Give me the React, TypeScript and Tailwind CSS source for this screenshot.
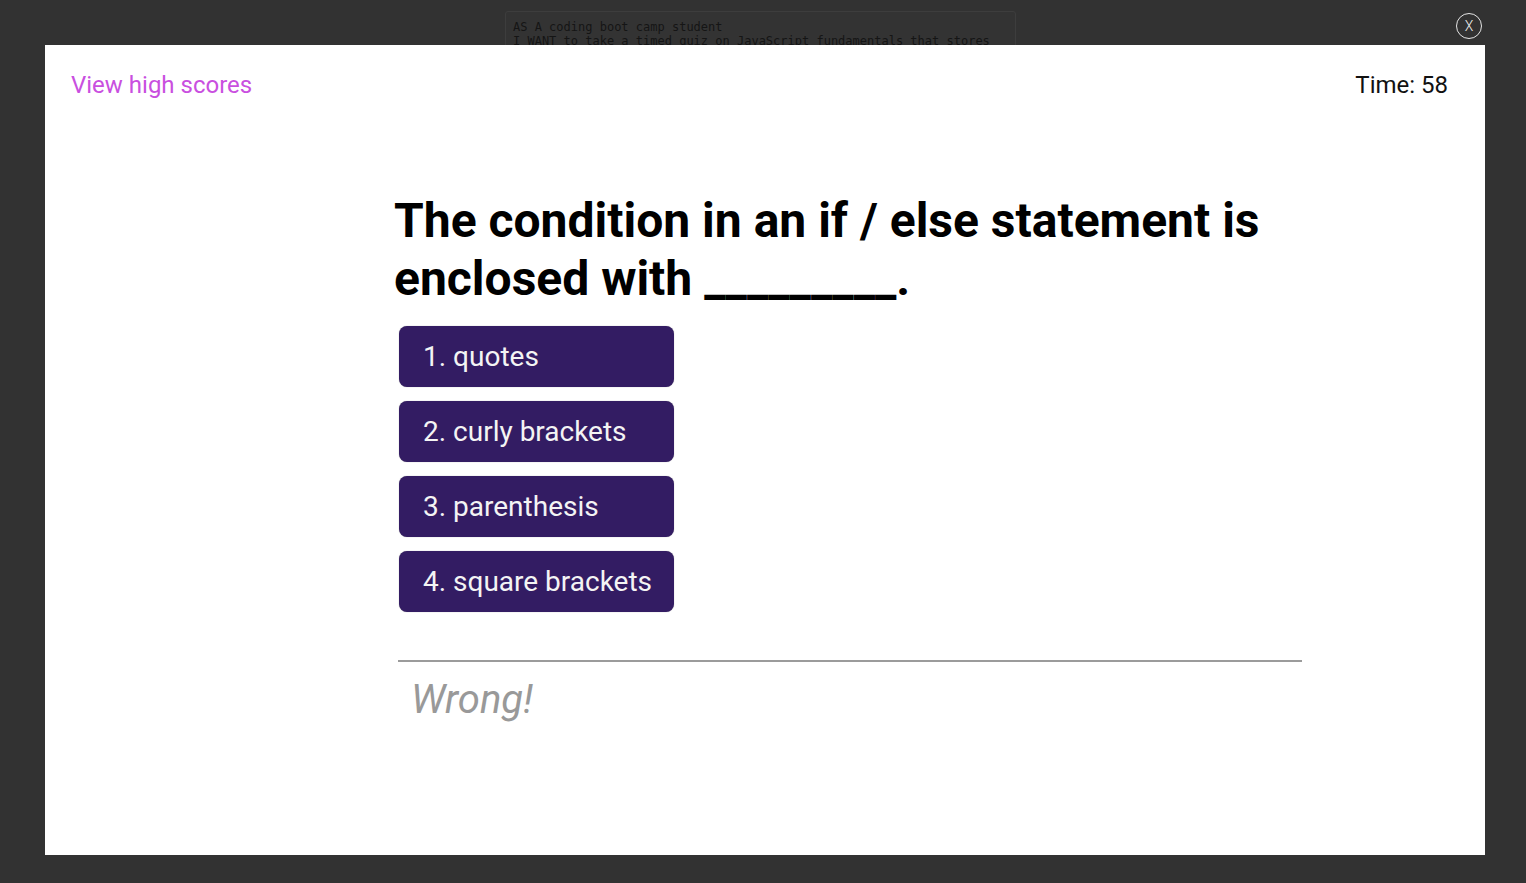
const choices = ["1. quotes", "2. curly brackets", "3. parenthesis", "4. square brackets"]

const App = () => {
  return (
    <div className="w-full h-[883px] bg-[#323232] overflow-hidden font-['Roboto',sans-serif]">
      {/* dimmed page behind the modal */}
      <div className="h-[45px] flex items-start overflow-hidden">
        <div className="ml-[505px] mt-[11px] w-[511px] h-[70px] shrink-0 rounded-[3px] border border-[#3d3d3d] bg-[#333333] px-[7px] pt-[8px] font-['DejaVu_Sans_Mono',monospace] text-[12px] leading-[14px] text-[#151515] whitespace-pre">
          {"AS A coding boot camp student\nI WANT to take a timed quiz on JavaScript fundamentals that stores"}
        </div>
        <button className="ml-auto mr-[44px] mt-[13px] w-[26px] h-[26px] rounded-full border border-[#e5e5e5] flex items-center justify-center text-[#eee] text-[14px] leading-none font-light">
          X
        </button>
      </div>

      <div className="ml-[45px] mr-[41px] h-[810px] bg-white">
        <div className="flex justify-between items-center pt-[26px] pl-[26px] pr-[37px]">
          <a className="text-[24px] leading-[28px] text-[#c94fdf]">View high scores</a>
          <span className="text-[24px] leading-[28px] text-[#111]">Time: 58</span>
        </div>

        <div className="ml-[349px] w-[908px] mt-[93px]">
          <h1 className="text-[48px] leading-[57.6px] font-bold text-black">
            The condition in an if / else statement is enclosed with _________.
          </h1>
          <div className="mt-[19px] flex flex-col gap-[14px] pl-[5px]">
            {choices.map((c) => (
              <button
                key={c}
                className="w-[275px] h-[61px] rounded-[8px] bg-[#331c63] text-left pl-[24px] text-[28px] text-[#f4f4f4] shadow-[0_0_1px_rgba(0,0,0,0.4)]"
              >
                {c}
              </button>
            ))}
          </div>
          <div className="mt-[48px] ml-[4px] border-t-2 border-[#9b9b9b]" />
          <p className="ml-[17px] mt-[14px] text-[40px] leading-[48px] italic text-[#999]">Wrong!</p>
        </div>
      </div>
    </div>
  )
}

export default App
